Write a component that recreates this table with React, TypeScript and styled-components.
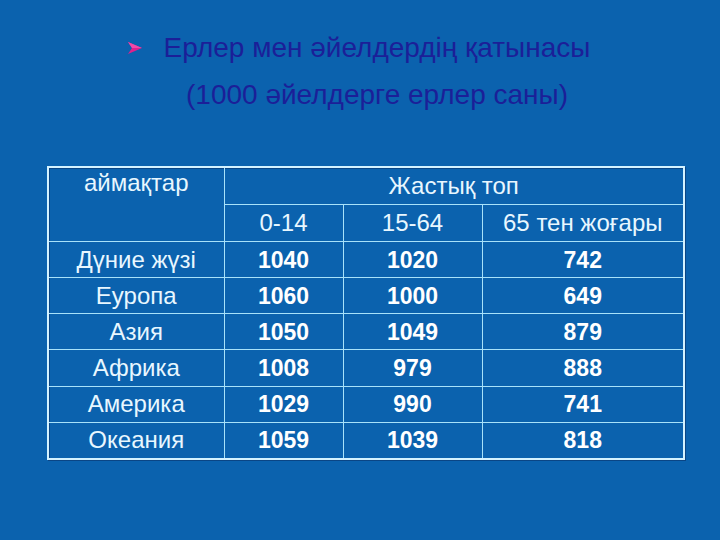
import styled, { createGlobalStyle } from 'styled-components';

const GlobalStyle = createGlobalStyle`
  html, body {
    margin: 0;
    padding: 0;
    background: #0b62ae;
  }
`;

const Slide = styled.div`
  width: 720px;
  height: 540px;
  background: #0b62ae;
  font-family: 'Liberation Sans', Arial, sans-serif;
  overflow: hidden;
  box-sizing: border-box;
  padding-top: 24px;
`;

const TitleRow = styled.div`
  display: flex;
  align-items: flex-start;
  padding-left: 127px;
`;

const Bullet = styled.svg`
  width: 16px;
  height: 14px;
  margin-top: 17px;
  margin-right: 7px;
  flex: none;
`;

const Title = styled.h1`
  margin: 0;
  width: 454px;
  text-align: center;
  font-size: 28px;
  line-height: 47px;
  font-weight: normal;
  color: #1b1f98;
`;

const Table = styled.table`
  margin: 48px 0 0 47px;
  width: 636px;
  border-collapse: collapse;
  border: 2px solid #d4f2ff;
  box-shadow: inset 1px 1px 0 #0a4585, 1px 1px 0 #0a4585;
  table-layout: fixed;
`;

const Cell = styled.td<{ $bold?: boolean; $top?: boolean; $head?: boolean }>`
  border: 1px solid #a8e2fa;
  padding: 0;
  height: ${p => (p.$head ? 36 : 35.15)}px;
  text-align: center;
  vertical-align: ${p => (p.$top ? 'top' : 'middle')};
  font-size: ${p => (p.$bold ? 23 : 24)}px;
  font-weight: ${p => (p.$bold ? 'bold' : 'normal')};
  color: ${p => (p.$bold ? '#ffffff' : '#e8f7ff')};
  white-space: nowrap;
  line-height: ${p => (p.$top ? 30 : 34)}px;
`;

const rows: [string, number, number, number][] = [
  ['Дүние жүзі', 1040, 1020, 742],
  ['Еуропа', 1060, 1000, 649],
  ['Азия', 1050, 1049, 879],
  ['Африка', 1008, 979, 888],
  ['Америка', 1029, 990, 741],
  ['Океания', 1059, 1039, 818],
];

export default function App() {
  return (
    <>
      <GlobalStyle />
      <Slide>
        <TitleRow>
          <Bullet viewBox="0 0 16 14">
            <path d="M1 1 L15 7 L1 13 L5 7 Z" fill="#e0208c" />
            <path d="M1 1 L15 7 L5 7 Z" fill="#f04aa8" />
          </Bullet>
          <Title>
            Ерлер мен әйелдердің қатынасы
            <br />
            (1000 әйелдерге ерлер саны)
          </Title>
        </TitleRow>
        <Table>
          <colgroup>
            <col style={{ width: 176 }} />
            <col style={{ width: 119 }} />
            <col style={{ width: 139 }} />
            <col style={{ width: 202 }} />
          </colgroup>
          <tbody>
            <tr>
              <Cell rowSpan={2} $top $head>
                аймақтар
              </Cell>
              <Cell colSpan={3} $head>
                Жастық топ
              </Cell>
            </tr>
            <tr>
              <Cell $head>0-14</Cell>
              <Cell $head>15-64</Cell>
              <Cell $head>65 тен жоғары</Cell>
            </tr>
            {rows.map(([name, a, b, c]) => (
              <tr key={name}>
                <Cell>{name}</Cell>
                <Cell $bold>{a}</Cell>
                <Cell $bold>{b}</Cell>
                <Cell $bold>{c}</Cell>
              </tr>
            ))}
          </tbody>
        </Table>
      </Slide>
    </>
  );
}
